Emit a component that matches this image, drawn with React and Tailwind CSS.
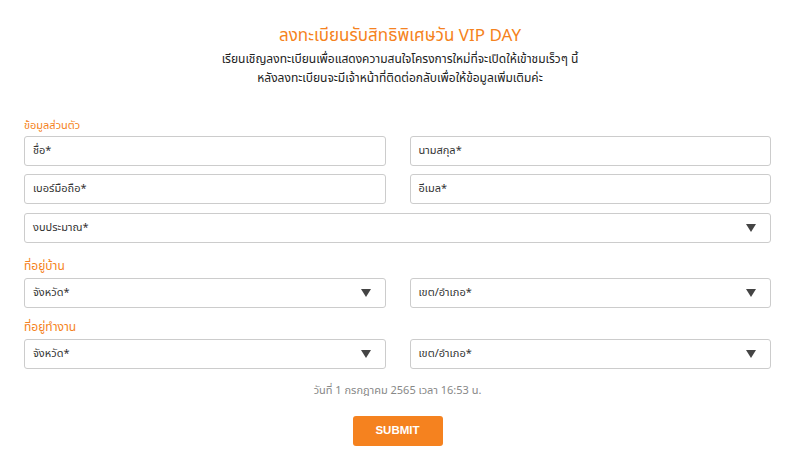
import React from "react";

const font = { fontFamily: '"Noto Sans Thai", "Noto Sans", "Liberation Sans", sans-serif' };

function Input({ label, className = "" }) {
  return (
    <div className={"h-[30px] border border-[#cccccc] rounded-[3px] bg-white flex items-center px-[8px] text-[11px] text-[#333333] " + className}>
      {label}
    </div>
  );
}

function Select({ label, className = "" }) {
  return (
    <div className={"h-[30px] border border-[#cccccc] rounded-[3px] bg-white flex items-center justify-between pl-[8px] pr-[14px] text-[11px] text-[#333333] " + className}>
      <span>{label}</span>
      <svg width="10" height="8" viewBox="0 0 10 8"><path d="M0 0 H10 L5 8 Z" fill="#444444" /></svg>
    </div>
  );
}

export default function App() {
  return (
    <div className="w-[800px] h-[475px] bg-white overflow-hidden" style={font}>
      <div className="flex flex-col items-center pt-[25px]">
        <div className="text-[17px] leading-[22px] text-[#f58220]">ลงทะเบียนรับสิทธิพิเศษวัน VIP DAY</div>
        <div className="mt-[3px] text-[12px] leading-[19px] text-[#222222] text-center">
          <div>เรียนเชิญลงทะเบียนเพื่อแสดงความสนใจโครงการใหม่ที่จะเปิดให้เข้าชมเร็วๆ นี้</div>
          <div>หลังลงทะเบียนจะมีเจ้าหน้าที่ติดต่อกลับเพื่อให้ข้อมูลเพิ่มเติมค่ะ</div>
        </div>
      </div>
      <div className="ml-[24px] w-[747px] mt-[30px]">
        <div className="text-[11px] leading-[16px] text-[#f58220]">ข้อมูลส่วนตัว</div>
        <div className="mt-[2px] grid grid-cols-2 gap-x-[24px] gap-y-[8px]">
          <Input label="ชื่อ*" />
          <Input label="นามสกุล*" />
          <Input label="เบอร์มือถือ*" />
          <Input label="อีเมล*" />
        </div>
        <Select label="งบประมาณ*" className="mt-[9px]" />
        <div className="mt-[14px] text-[12px] leading-[18px] text-[#f58220]">ที่อยู่บ้าน</div>
        <div className="mt-[3px] grid grid-cols-2 gap-x-[24px]">
          <Select label="จังหวัด*" />
          <Select label="เขต/อำเภอ*" />
        </div>
        <div className="mt-[10px] text-[12px] leading-[18px] text-[#f58220]">ที่อยู่ทำงาน</div>
        <div className="mt-[3px] grid grid-cols-2 gap-x-[24px]">
          <Select label="จังหวัด*" />
          <Select label="เขต/อำเภอ*" />
        </div>
        <div className="mt-[14px] text-center text-[11px] leading-[16px] text-[#888888]">วันที่ 1 กรกฎาคม 2565 เวลา 16:53 น.</div>
        <div className="mt-[17px] flex justify-center">
          <button className="w-[90px] h-[30px] rounded-[3px] bg-[#f5821f] text-white text-[11.5px] font-bold" style={{ fontFamily: '"Liberation Sans", Arial, sans-serif' }}>SUBMIT</button>
        </div>
      </div>
    </div>
  );
}
